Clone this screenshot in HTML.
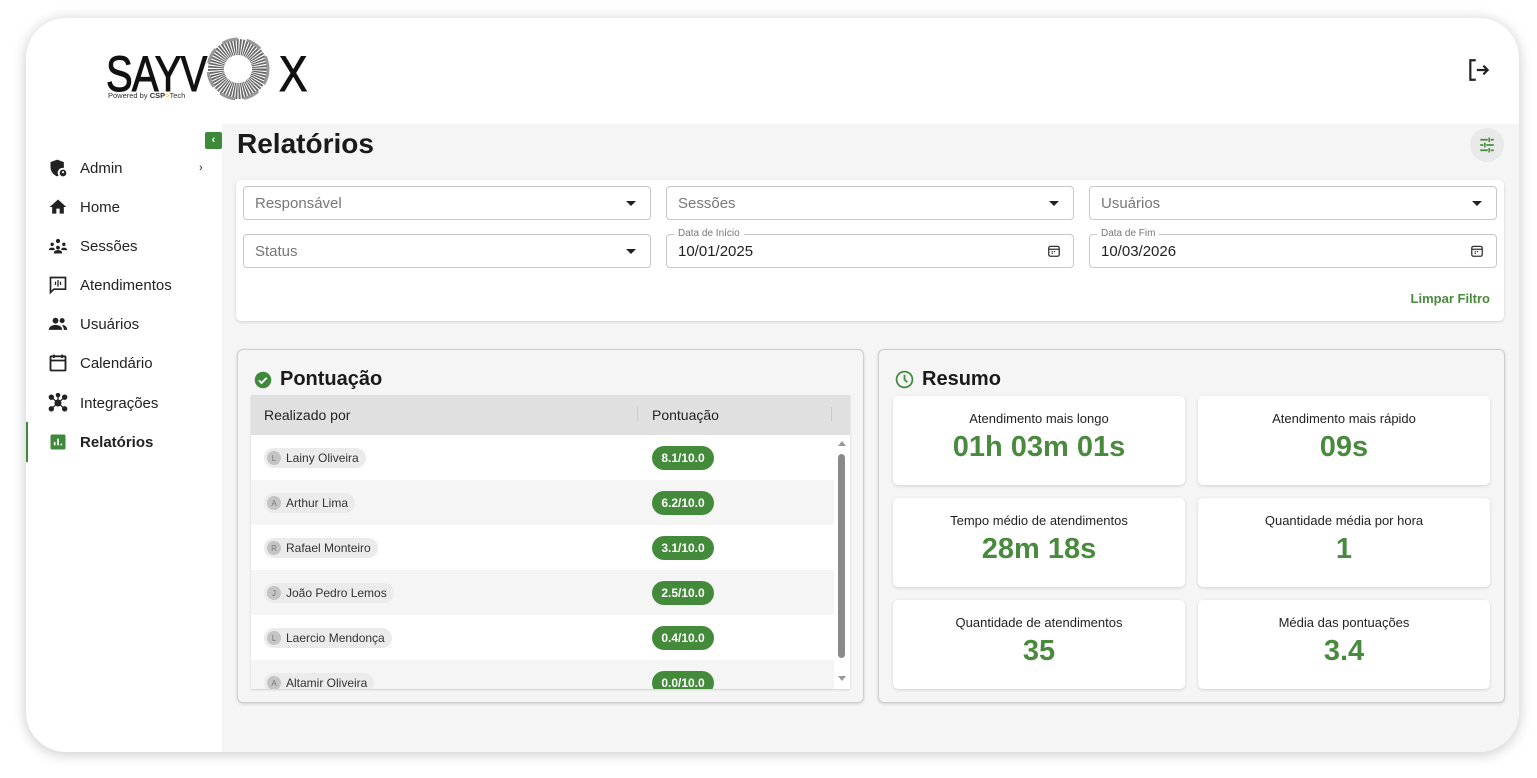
<!DOCTYPE html>
<html><head><meta charset="utf-8"><style>
*{box-sizing:border-box;margin:0;padding:0}
body{width:1537px;height:778px;background:#fff;font-family:"Liberation Sans",sans-serif;position:relative;overflow:hidden;color:#222}
.card{position:absolute;left:26px;top:18px;width:1493px;height:734px;background:#fff;border-radius:40px;box-shadow:0 2px 14px rgba(0,0,0,.22);overflow:hidden}
.abs{position:absolute}
.main{left:196px;top:106px;width:1297px;height:640px;background:#f5f5f5}
.nav{left:22px;font-size:15px;color:#222;display:flex;align-items:center}
.nav svg{width:20px;height:20px;margin-right:12px}
.field{position:absolute;height:34px;border:1px solid #c8c8c8;border-radius:4px;background:#fff;font-size:15px;color:#777;padding:8px 11px}
.field .arr{position:absolute;right:14px;top:14px;border-left:5px solid transparent;border-right:5px solid transparent;border-top:5px solid #222}
.field .lab{position:absolute;left:7px;top:-7px;background:#fff;padding:0 4px;font-size:10px;color:#777}
.field.d{color:#222;padding-top:8px}
.panel{position:absolute;top:331px;width:627px;height:354px;background:#f5f5f5;border:1px solid #cfcfcf;border-radius:6px;box-shadow:0 1px 3px rgba(0,0,0,.15)}
.ptitle{position:absolute;left:16px;top:18px;font-size:20px;font-weight:bold;display:flex;align-items:center;color:#1a1a1a}
.row{position:absolute;left:0;width:583px;height:45px}
.chip{position:absolute;left:13px;top:13px;height:20px;border-radius:10px;background:#ebebeb;font-size:12px;color:#333;padding:0 7px 0 3px;display:flex;align-items:center}
.av{width:14px;height:14px;border-radius:50%;background:#c4c4c4;color:#777;font-size:8px;display:inline-flex;align-items:center;justify-content:center;margin-right:5px}
.sc{position:absolute;left:401px;top:11px;width:62px;height:24px;border-radius:12px;background:#438a3a;color:#fff;font-size:12px;font-weight:bold;text-align:center;line-height:24px}
.stat{position:absolute;width:292px;height:89px;background:#fff;border-radius:5px;box-shadow:0 1px 3px rgba(0,0,0,.15);text-align:center}
.stat .l{font-size:13px;color:#222;margin-top:15px}
.stat .v{font-size:29px;font-weight:bold;color:#4a8a3e;margin-top:5px}
</style></head><body>
<div class="card">
  <div class="abs main"></div>
  <!-- logo -->
  <div class="abs" style="left:80px;top:27px;font-size:50px;color:#111;transform:scaleX(0.8);transform-origin:left;letter-spacing:-1px;-webkit-text-stroke:1px #111">SAYV</div>
  <svg class="abs" style="left:170px;top:17px" width="84" height="68" viewBox="0 0 84 68"><circle cx="42" cy="34" r="22" fill="none" stroke="#666" stroke-width="16" stroke-dasharray="1.5 1"/><circle cx="42" cy="34" r="30" fill="none" stroke="#999" stroke-width="3" stroke-dasharray="16 9"/></svg>
  <div class="abs" style="left:253px;top:27px;font-size:50px;color:#111;transform:scaleX(0.85);transform-origin:left;-webkit-text-stroke:1px #111">X</div>
  <div class="abs" style="left:82px;top:73px;font-size:7.5px;color:#333">Powered by <b>CSP</b><span style="color:#e5b800">&gt;</span>Tech</div>
  <!-- logout -->
  <svg class="abs" style="left:1440px;top:39px" width="26" height="26" viewBox="0 0 24 24" fill="none" stroke="#222" stroke-width="2"><path d="M9 3H4v18h5M10 12h10M16 8l4 4-4 4"/></svg>
  <!-- collapse btn -->
  <div class="abs" style="left:179px;top:114px;width:17px;height:17px;background:#3f8a3a;border-radius:2px;color:#fff;font-size:11px;text-align:center;line-height:17px;font-weight:bold">&lsaquo;</div>
  <!-- nav -->
  <div class="abs nav" style="top:140px"><svg viewBox="0 0 24 24"><path d="M11 2L3 5v6c0 5 3.5 9.5 8 11 .6-.2 1.2-.5 1.7-.8A6 6 0 0119 12V5z" fill="#222"/><circle cx="18" cy="18" r="4" fill="#222"/><circle cx="18" cy="17" r="1.3" fill="#fff"/></svg>Admin</div>
  <div class="abs" style="left:173px;top:144px;font-size:11px">&rsaquo;</div>
  <div class="abs nav" style="top:179px"><svg viewBox="0 0 24 24"><path d="M10 20v-6h4v6h5v-8h3L12 3 2 12h3v8z" fill="#222"/></svg>Home</div>
  <div class="abs nav" style="top:218px"><svg viewBox="0 0 24 24" fill="#222"><circle cx="12" cy="6" r="2.5"/><circle cx="5" cy="10" r="2"/><circle cx="19" cy="10" r="2"/><circle cx="12" cy="14" r="2.3"/><path d="M7 21c0-3 2-4 5-4s5 1 5 4zM1 17c0-2 2-3 4-3s3 1 3 2v1zM23 17c0-2-2-3-4-3s-3 1-3 2v1z"/></svg>Sessões</div>
  <div class="abs nav" style="top:257px"><svg viewBox="0 0 24 24" fill="none" stroke="#222" stroke-width="2"><path d="M3 3h18v14H7l-4 4z"/><path d="M9 8v4M12 6v8M15 8v4" stroke-width="1.5"/></svg>Atendimentos</div>
  <div class="abs nav" style="top:296px"><svg viewBox="0 0 24 24" fill="#222"><circle cx="9" cy="8" r="3.5"/><circle cx="17" cy="8" r="3"/><path d="M1 19c0-4 4-6 8-6s8 2 8 6zM17 13c3 0 6 2 6 6h-4c0-2-1-4-2-6z"/></svg>Usuários</div>
  <div class="abs nav" style="top:335px"><svg viewBox="0 0 24 24" fill="none" stroke="#222" stroke-width="2.2"><rect x="3" y="4" width="18" height="17" rx="1"/><path d="M3 9h18M7 2v4M17 2v4"/></svg>Calendário</div>
  <div class="abs nav" style="top:375px"><svg viewBox="0 0 24 24" fill="#222" stroke="#222" stroke-width="1.5"><circle cx="12" cy="12" r="3.5"/><circle cx="4" cy="5" r="2.5"/><circle cx="20" cy="5" r="2.5"/><circle cx="4" cy="19" r="2.5"/><circle cx="20" cy="19" r="2.5"/><circle cx="12" cy="2.5" r="2"/><path d="M4 5l16 14M20 5L4 19M12 3v9"/></svg>Integrações</div>
  <div class="abs" style="left:0;top:404px;width:2px;height:40px;background:#3f8a3a"></div>
  <div class="abs nav" style="top:414px;font-weight:bold"><svg viewBox="0 0 24 24"><rect x="3" y="3" width="18" height="18" rx="2" fill="#3f8a3a"/><path d="M8 16v-4M12 16V8M16 16v-2" stroke="#fff" stroke-width="2"/></svg>Relatórios</div>
  <!-- title -->
  <div class="abs" style="left:211px;top:110px;font-size:28px;font-weight:bold;color:#1a1a1a">Relatórios</div>
  <div class="abs" style="left:1444px;top:110px;width:34px;height:34px;border-radius:50%;background:#e9e9e9"></div>
  <svg class="abs" style="left:1452px;top:118px" width="18" height="18" viewBox="0 0 24 24" stroke="#4a8a3e" stroke-width="2.2"><path d="M3 5h10M17 5h4M15 2v6M3 12h4M11 12h10M9 9v6M3 19h10M17 19h4M15 16v6"/></svg>
  <!-- filter card -->
  <div class="abs" style="left:210px;top:162px;width:1268px;height:141px;background:#fff;border-radius:5px;box-shadow:0 1px 3px rgba(0,0,0,.15)">
    <div class="field" style="left:7px;top:6px;width:408px">Responsável<span class="arr"></span></div>
    <div class="field" style="left:430px;top:6px;width:408px">Sessões<span class="arr"></span></div>
    <div class="field" style="left:853px;top:6px;width:408px">Usuários<span class="arr"></span></div>
    <div class="field" style="left:7px;top:54px;width:408px">Status<span class="arr"></span></div>
    <div class="field d" style="left:430px;top:54px;width:408px"><span class="lab">Data de Início</span>10/01/2025<svg style="position:absolute;right:12px;top:9px" width="14" height="14" viewBox="0 0 24 24" fill="none" stroke="#333" stroke-width="2.2"><rect x="3" y="4" width="18" height="17" rx="3"/><path d="M3 9h18M8 13h2M12 13h2M8 16h2"/></svg></div>
    <div class="field d" style="left:853px;top:54px;width:408px"><span class="lab">Data de Fim</span>10/03/2026<svg style="position:absolute;right:12px;top:9px" width="14" height="14" viewBox="0 0 24 24" fill="none" stroke="#333" stroke-width="2.2"><rect x="3" y="4" width="18" height="17" rx="3"/><path d="M3 9h18M8 13h2M12 13h2M8 16h2"/></svg></div>
    <div style="position:absolute;right:14px;top:111px;font-size:13px;font-weight:bold;color:#4a8a3e">Limpar Filtro</div>
  </div>
  <!-- pontuacao -->
  <div class="panel" style="left:211px">
    <div class="ptitle"><svg width="18" height="18" viewBox="0 0 24 24" style="margin-right:8px"><circle cx="12" cy="12" r="11" fill="#3f8a3a"/><path d="M6.5 12.5l3.5 3.5 7-7" stroke="#fff" stroke-width="2.5" fill="none"/></svg>Pontuação</div>
    <div style="position:absolute;left:13px;top:45px;width:599px;height:294px;background:#fff;overflow:hidden;box-shadow:0 1px 2px rgba(0,0,0,.15)">
      <div style="position:absolute;left:0;top:0;width:599px;height:40px;background:#e0e0e0;font-size:14px;color:#222">
        <span style="position:absolute;left:13px;top:12px">Realizado por</span>
        <span style="position:absolute;left:386px;top:12px;width:1px;height:14px;background:#ccc"></span>
        <span style="position:absolute;left:401px;top:12px">Pontuação</span>
        <span style="position:absolute;left:580px;top:12px;width:1px;height:14px;background:#ccc"></span>
      </div>
      <div class="row" style="top:40px;background:#fff"><div class="chip"><span class="av">L</span>Lainy Oliveira</div><div class="sc">8.1/10.0</div></div>
      <div class="row" style="top:85px;background:#f5f5f5"><div class="chip"><span class="av">A</span>Arthur Lima</div><div class="sc">6.2/10.0</div></div>
      <div class="row" style="top:130px;background:#fff"><div class="chip"><span class="av">R</span>Rafael Monteiro</div><div class="sc">3.1/10.0</div></div>
      <div class="row" style="top:175px;background:#f5f5f5"><div class="chip"><span class="av">J</span>João Pedro Lemos</div><div class="sc">2.5/10.0</div></div>
      <div class="row" style="top:220px;background:#fff"><div class="chip"><span class="av">L</span>Laercio Mendonça</div><div class="sc">0.4/10.0</div></div>
      <div class="row" style="top:265px;background:#f5f5f5"><div class="chip"><span class="av">A</span>Altamir Oliveira</div><div class="sc">0.0/10.0</div></div>
      <div style="position:absolute;left:587px;top:46px;border-left:4px solid transparent;border-right:4px solid transparent;border-bottom:5px solid #999"></div>
      <div style="position:absolute;left:587px;top:59px;width:7px;height:204px;border-radius:4px;background:#8a8a8a"></div>
      <div style="position:absolute;left:587px;top:281px;border-left:4px solid transparent;border-right:4px solid transparent;border-top:5px solid #999"></div>
    </div>
  </div>
  <!-- resumo -->
  <div class="panel" style="left:852px">
    <div class="ptitle"><svg width="19" height="19" viewBox="0 0 24 24" style="margin-right:8px" fill="none" stroke="#3f8a3a" stroke-width="2.2"><circle cx="12" cy="12" r="10"/><path d="M12 6v6l3.5 3.5"/></svg>Resumo</div>
    <div class="stat" style="left:14px;top:46px"><div class="l">Atendimento mais longo</div><div class="v">01h 03m 01s</div></div>
    <div class="stat" style="left:319px;top:46px"><div class="l">Atendimento mais rápido</div><div class="v">09s</div></div>
    <div class="stat" style="left:14px;top:148px"><div class="l">Tempo médio de atendimentos</div><div class="v">28m 18s</div></div>
    <div class="stat" style="left:319px;top:148px"><div class="l">Quantidade média por hora</div><div class="v">1</div></div>
    <div class="stat" style="left:14px;top:250px"><div class="l">Quantidade de atendimentos</div><div class="v">35</div></div>
    <div class="stat" style="left:319px;top:250px"><div class="l">Média das pontuações</div><div class="v">3.4</div></div>
  </div>
</div>
</body></html>
